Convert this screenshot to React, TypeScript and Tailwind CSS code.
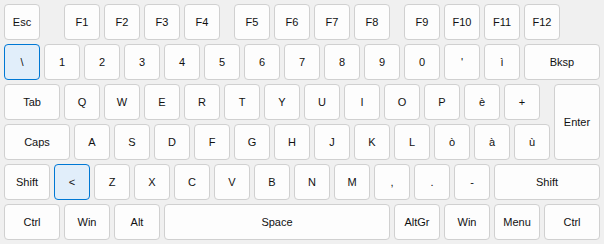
import React from 'react';

interface KeyDef {
  label: string;
  cls: string;
  active?: boolean;
}

// 60-column grid, 6px columns + 4px gap => 10px pitch per unit
const keys: KeyDef[] = [
  // row 1
  { label: 'Esc', cls: 'col-start-1 col-span-4' },
  { label: 'F1', cls: 'col-start-7 col-span-4' },
  { label: 'F2', cls: 'col-span-4' },
  { label: 'F3', cls: 'col-span-4' },
  { label: 'F4', cls: 'col-span-4' },
  { label: 'F5', cls: 'col-start-24 col-span-4' },
  { label: 'F6', cls: 'col-span-4' },
  { label: 'F7', cls: 'col-span-4' },
  { label: 'F8', cls: 'col-span-4' },
  { label: 'F9', cls: 'col-start-41 col-span-4' },
  { label: 'F10', cls: 'col-span-4' },
  { label: 'F11', cls: 'col-span-4' },
  { label: 'F12', cls: 'col-span-4' },
  // row 2
  { label: '\\', cls: 'col-start-1 col-span-4', active: true },
  { label: '1', cls: 'col-span-4' },
  { label: '2', cls: 'col-span-4' },
  { label: '3', cls: 'col-span-4' },
  { label: '4', cls: 'col-span-4' },
  { label: '5', cls: 'col-span-4' },
  { label: '6', cls: 'col-span-4' },
  { label: '7', cls: 'col-span-4' },
  { label: '8', cls: 'col-span-4' },
  { label: '9', cls: 'col-span-4' },
  { label: '0', cls: 'col-span-4' },
  { label: "'", cls: 'col-span-4' },
  { label: 'ì', cls: 'col-span-4' },
  { label: 'Bksp', cls: 'col-span-8' },
  // row 3
  { label: 'Tab', cls: 'col-start-1 col-span-6' },
  { label: 'Q', cls: 'col-span-4' },
  { label: 'W', cls: 'col-span-4' },
  { label: 'E', cls: 'col-span-4' },
  { label: 'R', cls: 'col-span-4' },
  { label: 'T', cls: 'col-span-4' },
  { label: 'Y', cls: 'col-span-4' },
  { label: 'U', cls: 'col-span-4' },
  { label: 'I', cls: 'col-span-4' },
  { label: 'O', cls: 'col-span-4' },
  { label: 'P', cls: 'col-span-4' },
  { label: 'è', cls: 'col-span-4' },
  { label: '+', cls: 'col-span-4' },
  { label: 'Enter', cls: 'col-start-56 col-span-5 row-span-2' },
  // row 4
  { label: 'Caps', cls: 'col-start-1 col-span-7' },
  { label: 'A', cls: 'col-span-4' },
  { label: 'S', cls: 'col-span-4' },
  { label: 'D', cls: 'col-span-4' },
  { label: 'F', cls: 'col-span-4' },
  { label: 'G', cls: 'col-span-4' },
  { label: 'H', cls: 'col-span-4' },
  { label: 'J', cls: 'col-span-4' },
  { label: 'K', cls: 'col-span-4' },
  { label: 'L', cls: 'col-span-4' },
  { label: 'ò', cls: 'col-span-4' },
  { label: 'à', cls: 'col-span-4' },
  { label: 'ù', cls: 'col-span-4' },
  // row 5
  { label: 'Shift', cls: 'col-start-1 col-span-5' },
  { label: '<', cls: 'col-span-4', active: true },
  { label: 'Z', cls: 'col-span-4' },
  { label: 'X', cls: 'col-span-4' },
  { label: 'C', cls: 'col-span-4' },
  { label: 'V', cls: 'col-span-4' },
  { label: 'B', cls: 'col-span-4' },
  { label: 'N', cls: 'col-span-4' },
  { label: 'M', cls: 'col-span-4' },
  { label: ',', cls: 'col-span-4' },
  { label: '.', cls: 'col-span-4' },
  { label: '-', cls: 'col-span-4' },
  { label: 'Shift', cls: 'col-span-11' },
  // row 6
  { label: 'Ctrl', cls: 'col-start-1 col-span-6' },
  { label: 'Win', cls: 'col-span-5' },
  { label: 'Alt', cls: 'col-span-5' },
  { label: 'Space', cls: 'col-span-23' },
  { label: 'AltGr', cls: 'col-span-5' },
  { label: 'Win', cls: 'col-span-5' },
  { label: 'Menu', cls: 'col-span-5' },
  { label: 'Ctrl', cls: 'col-span-6' },
];

const App: React.FC = () => {
  return (
    <div className="w-[604px] h-[244px] bg-[#f0f0f0] p-1 font-['Liberation_Sans',Arial,sans-serif] text-[11px] text-[#111111]">
      <div className="grid grid-cols-[repeat(60,6px)] auto-rows-[36px] gap-1">
        {keys.map((k, i) => (
          <div
            key={i}
            className={`${k.cls} flex items-center justify-center rounded-[4px] border ${
              k.active ? 'border-[#0078d4] bg-[#e1eefa]' : 'border-[#d0d0d0] bg-[#fdfdfd]'
            }`}
          >
            {k.label}
          </div>
        ))}
      </div>
    </div>
  );
};

export default App;
